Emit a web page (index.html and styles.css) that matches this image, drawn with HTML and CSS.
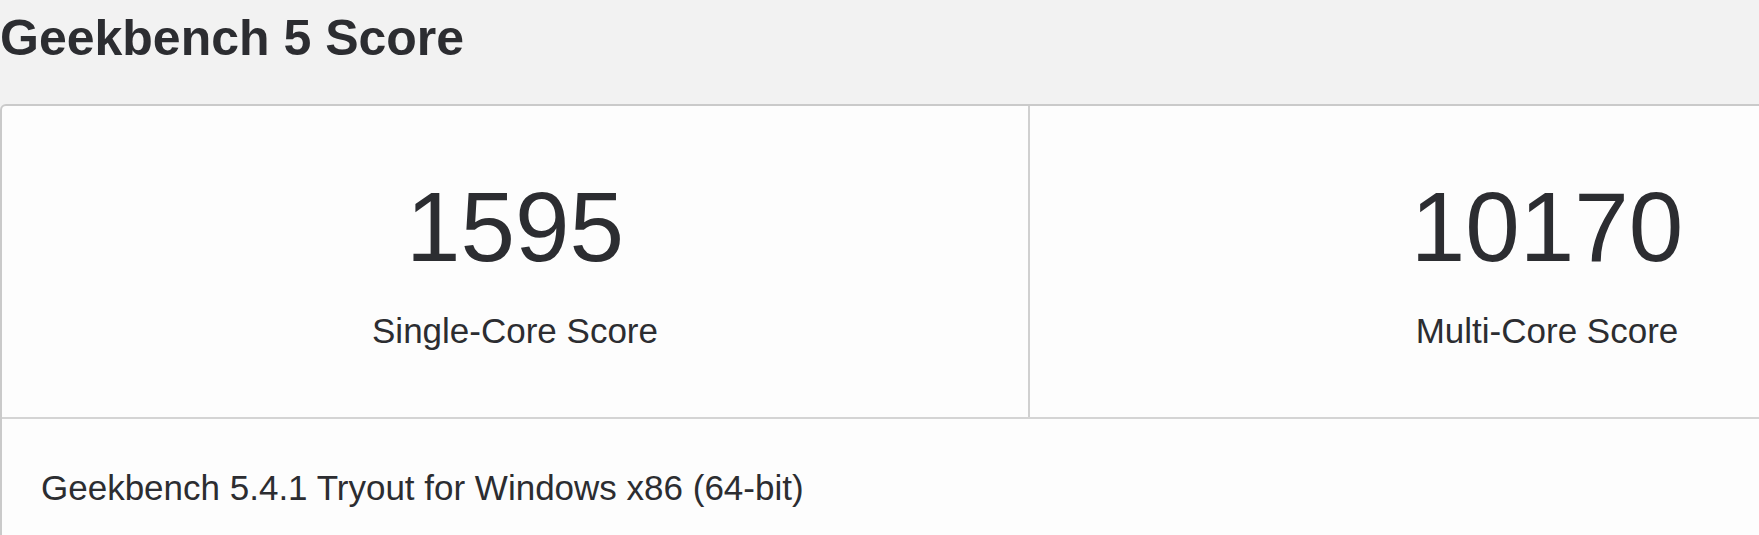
FILE: index.html
```html
<!DOCTYPE html>
<html>
<head>
    <title>Geekbench 5 Score</title>
    <meta charset="UTF-8">
    <meta name="viewport" content="width=device-width, initial-scale=1.0">
    <link rel="stylesheet" href="styles.css">
</head>
<body>
    <h1>Geekbench 5 Score</h1>

    <div class="score-card">
        <div class="scores">
            <div class="score">
                <div class="score-value">1595</div>
                <div class="score-name">Single-Core Score</div>
            </div>
            <div class="score">
                <div class="score-value">10170</div>
                <div class="score-name">Multi-Core Score</div>
            </div>
        </div>
        <div class="version">Geekbench 5.4.1 Tryout for Windows x86 (64-bit)</div>
    </div>
</body>
</html>
```

FILE: styles.css
```css
body {
    font-family: "Liberation Sans", Arial, sans-serif;
    margin: 0;
    background-color: #f2f2f2;
    color: #2c2d31;
    overflow: hidden;
}
h1 {
    margin: 0;
    padding-top: 8px;
    font-size: 50px;
    line-height: 60px;
    font-weight: bold;
}
.score-card {
    margin-top: 36px;
    width: 2062px;
    background-color: #fdfdfd;
    border: 2px solid #cacaca;
    border-radius: 6px;
}
.scores {
    display: grid;
    grid-template-columns: 1028px 1fr;
    border-bottom: 2px solid #d4d4d4;
}
.score {
    text-align: center;
    padding: 66px 0;
}
.score:first-child {
    border-right: 2px solid #d0d0d0;
}
.score-value {
    font-size: 98px;
    line-height: 110px;
}
.score-name {
    margin-top: 29px;
    font-size: 35px;
    line-height: 40px;
}
.version {
    padding: 49px 39px 40px;
    font-size: 35px;
    line-height: 40px;
}
```
